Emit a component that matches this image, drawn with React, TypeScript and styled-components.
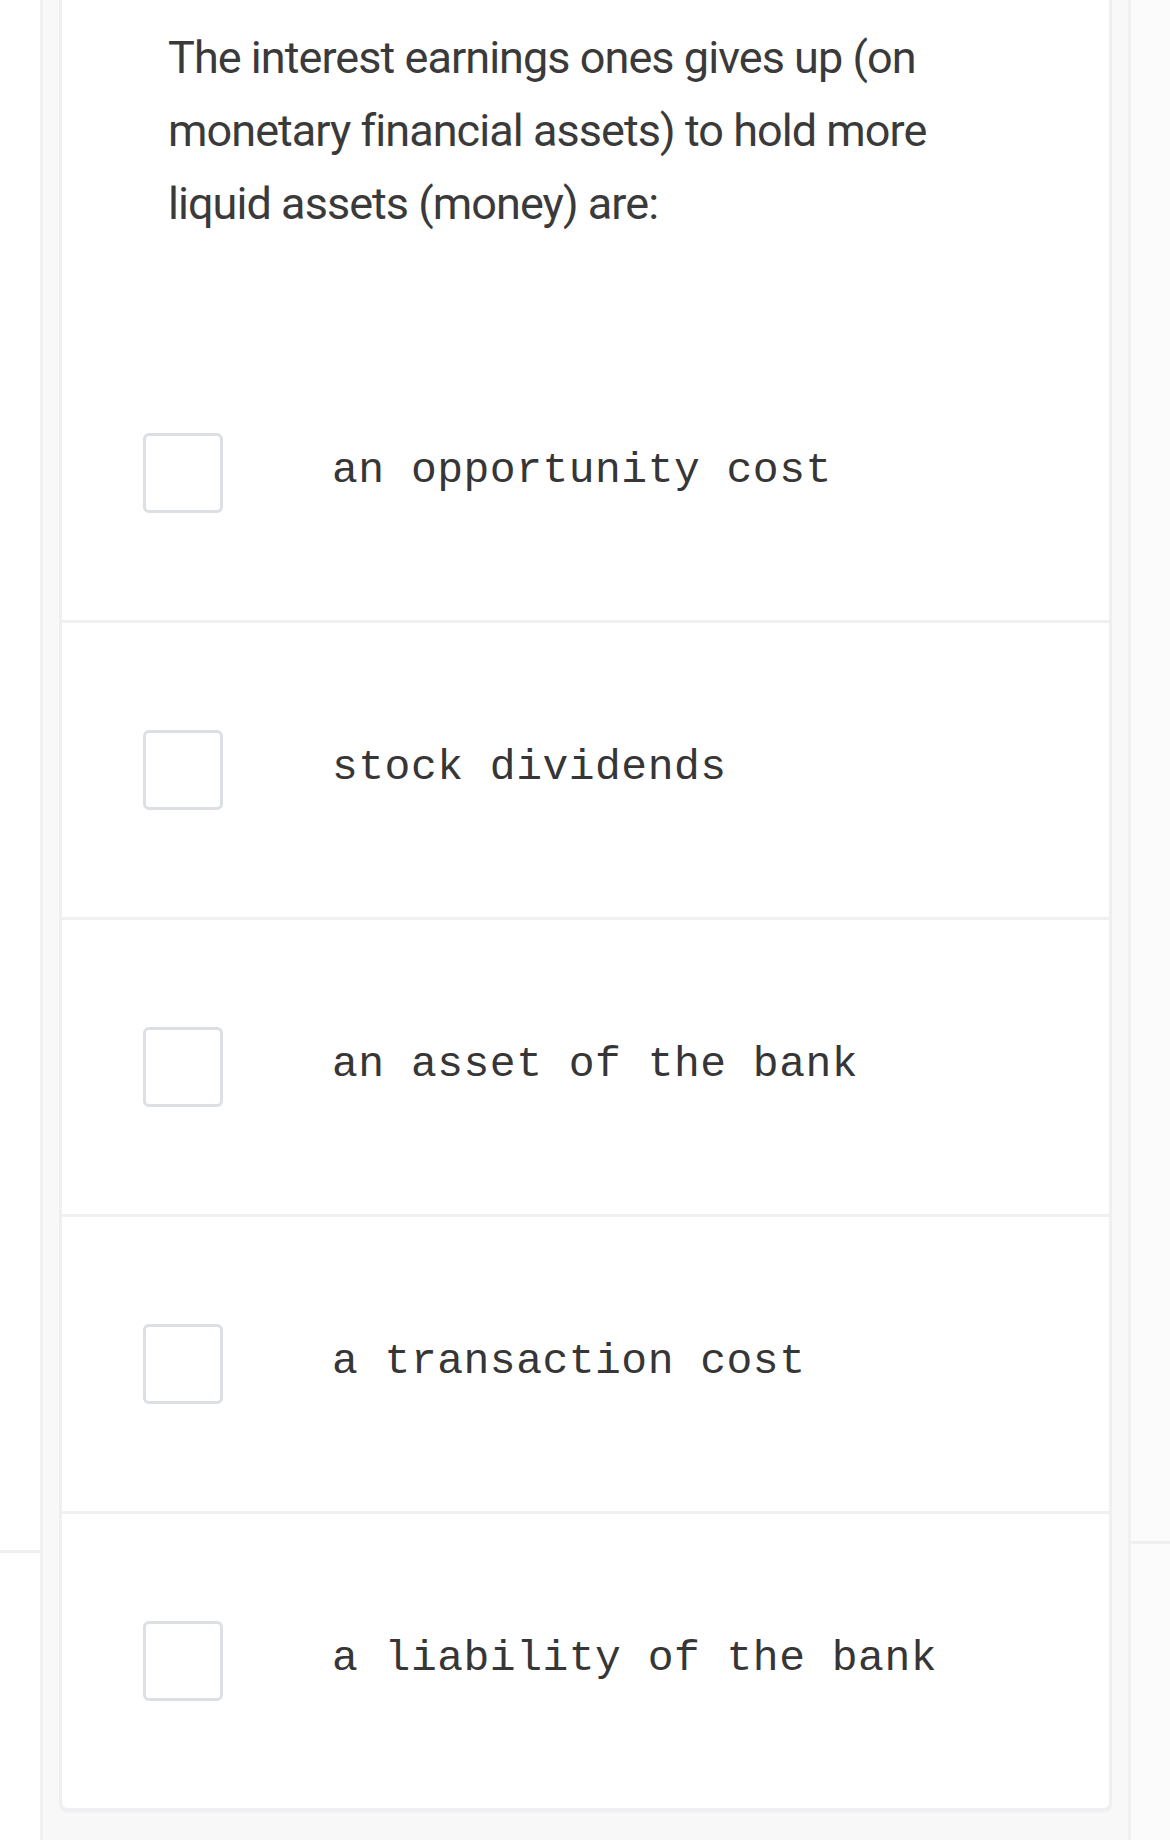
import React from "react";
import styled, { createGlobalStyle } from "styled-components";

const Global = createGlobalStyle`
  html, body { margin: 0; padding: 0; background: #ffffff; }
  #root { width: 1170px; height: 1840px; overflow: hidden; }
`;

const Page = styled.div`
  display: flex;
  width: 1170px;
  height: 1840px;
  background: #ffffff;
`;

const Peek = styled.div<{ $w: number; $bg: string }>`
  width: ${(p) => p.$w}px;
  flex: none;
  background: ${(p) => p.$bg};
`;

const PeekTop = styled.div<{ $h: number }>`
  height: ${(p) => p.$h}px;
  border-bottom: 3px solid #efeff1;
`;

const Column = styled.div`
  flex: none;
  width: 1091px;
  box-sizing: border-box;
  border-left: 3px solid #f0f0f2;
  border-right: 3px solid #f0f0f2;
  background: #f8f8f9;
  padding: 0 16px;
`;

const Card = styled.div`
  background: #ffffff;
  border: 3px solid #efeff1;
  border-top: none;
  border-radius: 0 0 8px 8px;
  box-shadow: 0 2px 0 #f2f2f4;
`;

const Question = styled.div`
  height: 326px;
  box-sizing: border-box;
  padding: 21px 0 0 106px;
  font-family: Roboto, "Liberation Sans", sans-serif;
  font-weight: 400;
  font-size: 45px;
  line-height: 73px;
  letter-spacing: -0.95px;
  color: #3a3a3a;
`;

const Row = styled.label`
  display: flex;
  align-items: center;
  height: 294px;
  padding-left: 81px;
  & + & {
    border-top: 3px solid #f0f0f2;
  }
`;

const Box = styled.span`
  width: 80px;
  height: 80px;
  box-sizing: border-box;
  border: 3px solid #dcdfe3;
  border-radius: 6px;
  background: #ffffff;
  flex: none;
`;

const OptionText = styled.span`
  margin-left: 109px;
  padding-bottom: 6px;
  font-family: "Liberation Mono", "DejaVu Sans Mono", monospace;
  font-size: 43px;
  letter-spacing: 0.5px;
  color: #363636;
  white-space: pre;
`;

const options = [
  "an opportunity cost",
  "stock dividends",
  "an asset of the bank",
  "a transaction cost",
  "a liability of the bank",
];

export default function App() {
  return (
    <>
      <Global />
      <Page>
        <Peek $w={40} $bg="#ffffff">
          <PeekTop $h={1550} />
        </Peek>
        <Column>
          <Card>
            <Question>
              The interest earnings ones gives up (on
              <br />
              monetary financial assets) to hold more
              <br />
              liquid assets (money) are:
            </Question>
            {options.map((o) => (
              <Row key={o}>
                <Box />
                <OptionText>{o}</OptionText>
              </Row>
            ))}
          </Card>
        </Column>
        <Peek $w={39} $bg="#fbfbfb">
          <PeekTop $h={1541} />
        </Peek>
      </Page>
    </>
  );
}
